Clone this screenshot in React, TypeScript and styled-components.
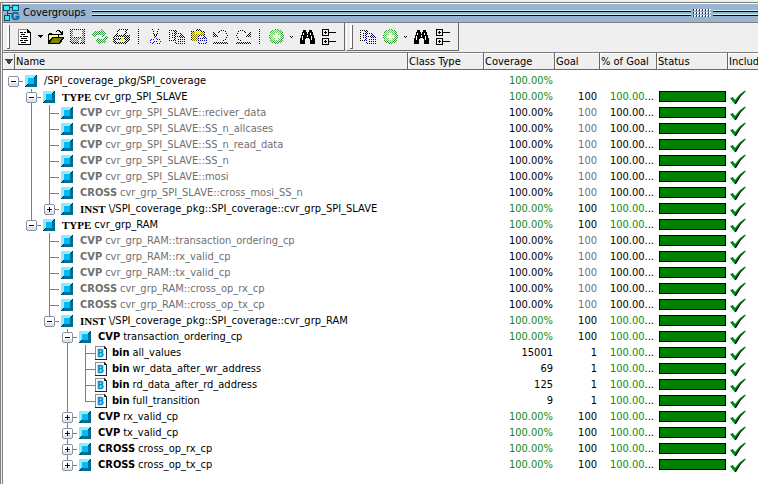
import React, { useId } from "react";
import styled, { createGlobalStyle } from "styled-components";

const line = "#7f7f7f";
const face = "#efefef";

const GlobalStyle = createGlobalStyle`
  * { box-sizing: border-box; }
  body {
    margin: 0;
    background: ${face};
    color: #000;
    font: 11px/16px "DejaVu Sans Condensed", "DejaVu Sans", sans-serif;
    white-space: nowrap;
  }
  button { font: inherit; color: inherit; padding: 0; margin: 0; border: 0; background: none; }
  svg { display: block; shape-rendering: crispEdges; flex: none; }
`;

const Window = styled.main`
  min-height: 100vh;
  padding-top: 2px;
  display: flex;
  flex-direction: column;
  overflow: hidden;
`;

const Frame = styled.div`
  flex: 1;
  display: flex;
  flex-direction: column;
  border-top: 1px solid ${line};
  border-left: 1px solid ${line};
  padding-left: 1px;
`;

const TitleBar = styled.header`
  display: flex;
  align-items: center;
  height: 20px;
  background: #99b4d1;
  border-top: 1px solid #fff;
  border-bottom: 1px solid ${line};
  border-left: 1px solid ${line};
`;

const Title = styled.h1`
  margin: 0 6px 0 2px;
  font-size: 11px;
  line-height: 16px;
  font-weight: normal;
`;

const Rails = styled.div<{ $width?: number }>`
  flex: ${(p) => (p.$width ? `0 0 ${p.$width}px` : "1")};
  height: 7px;
  background: linear-gradient(
    #c8f4fa 0 1px, #000 1px 2px, transparent 2px 4px, #c8f4fa 4px 5px, #000 5px 6px, transparent 6px
  );
`;

const Grip = styled.div`
  width: 18px;
  height: 8px;
  margin: 0 2px;
  background:
    conic-gradient(#fff 25%, transparent 0 75%, #234 0) 0 0 / 3px 3px;
`;

const ToolBars = styled.div`
  display: flex;
  gap: 1px;
  height: 29px;
  border-left: 1px solid ${line};
`;

const ToolGroup = styled.div`
  display: flex;
  align-items: center;
  height: 28px;
  padding-right: 4px;
  border-right: 1px solid #696969;
  border-bottom: 1px solid #696969;
  border-left: 1px solid #fff;
`;

const Handle = styled.span`
  width: 3px;
  height: 24px;
  margin: 0 4px 0 3px;
  background: #fff;
  border-right: 1px solid #696969;
  border-bottom: 1px solid #696969;
`;

const ToolButton = styled.button<{ $narrow?: boolean }>`
  display: flex;
  align-items: center;
  justify-content: center;
  width: ${(p) => (p.$narrow ? 9 : 22)}px;
  height: 24px;
`;

const Divider = styled.span`
  width: 1px;
  height: 15px;
  margin: 0 5px;
  background: repeating-linear-gradient(#000 0 1px, transparent 1px 2px);
`;

const Table = styled.table`
  width: 100%;
  table-layout: fixed;
  border-collapse: separate;
  border-spacing: 0;
  tbody::before { content: ""; display: block; height: 3px; }
`;

const TablePane = styled.div`
  flex: 1;
  background: #fff;
  border-left: 1px solid ${line};
`;

const Col = styled.col<{ $width?: number }>`
  width: ${(p) => (p.$width ? `${p.$width}px` : "auto")};
`;

const HeadCell = styled.th`
  height: 18px;
  padding: 1px 0 0 1px;
  line-height: 15px;
  font-weight: normal;
  text-align: left;
  background: ${face};
  border-top: 1px solid ${line};
  border-bottom: 1px solid #696969;
  border-right: 1px solid #696969;
  box-shadow: inset 1px 1px #fff;
  &:last-child { border-right: 0; }
`;

const NameHead = styled.div`
  display: flex;
  align-items: center;
`;

const SortButton = styled.button`
  display: flex;
  align-items: center;
  justify-content: center;
  width: 11px;
  height: 15px;
  margin-right: 1px;
  border-right: 1px solid #696969;
`;

const Cell = styled.td<{ $tone?: Tone; $right?: number }>`
  height: 16px;
  padding: 0 ${(p) => p.$right ?? 2}px 0 2px;
  vertical-align: top;
  text-align: right;
  color: ${(p) => tones[p.$tone ?? "black"]};
`;

const Ellipsis = styled.span`
  color: #000;
`;

const NameCell = styled.td<{ $dim?: boolean }>`
  height: 16px;
  padding: 0 0 0 2px;
  color: ${(p) => tones[p.$dim ? "gray" : "black"]};
`;

const TreeLine = styled.div`
  display: flex;
  height: 16px;
`;

const vertical = `linear-gradient(${line}, ${line}) 8px 0 / 1px 16px no-repeat`;
const upper = `linear-gradient(${line}, ${line}) 8px 0 / 1px 8px no-repeat`;
const stub = `linear-gradient(${line}, ${line}) 8px 8px / 10px 1px no-repeat`;
const guideArt: Record<string, string> = {
  " ": "none",
  "|": vertical,
  "+": `${vertical}, ${stub}`,
  L: `${upper}, ${stub}`,
  "-": stub,
};

const Guide = styled.span<{ $kind: string }>`
  flex: 0 0 18px;
  height: 16px;
  padding: 3px 0 0 3px;
  background: ${(p) => guideArt[p.$kind]};
`;

const Expander = styled.button`
  display: block;
  width: 11px;
  height: 11px;
`;

const NodeIcon = styled.span<{ $bin?: boolean }>`
  margin: ${(p) => (p.$bin ? "1px 5px 0 0" : "2px 7px 0 2px")};
`;

const Keyword = styled.b<{ $serif?: boolean }>`
  margin-right: 3px;
  font-family: ${(p) => (p.$serif ? '"Liberation Serif", serif' : "inherit")};
`;

const StatusBar = styled.div`
  height: 11px;
  margin-top: 2px;
  background: #008000;
  border: 1px solid #000;
`;

type Tone = "black" | "gray" | "green";
const tones: Record<Tone, string> = { black: "#000", gray: "#707070", green: "#128a12" };

function Dither({ children, width = 18, height = 16 }: { children: React.ReactNode; width?: number; height?: number }) {
  const id = useId().replace(/[^a-zA-Z0-9]/g, "");
  return (
    <svg width={width} height={height} viewBox={`0 0 ${width} ${height}`} aria-hidden>
      <defs>
        <pattern id={`p${id}`} width="2" height="2" patternUnits="userSpaceOnUse">
          <path d="M0 0h1v1H0zM1 1h1v1H1z" fill="#fff" />
        </pattern>
        <mask id={`m${id}`} maskUnits="userSpaceOnUse" x="0" y="0" width={width} height={height}>
          <rect width={width} height={height} fill={`url(#p${id})`} />
        </mask>
      </defs>
      <g mask={`url(#m${id})`}>{children}</g>
    </svg>
  );
}

const DocIcon = () => (
  <svg width="14" height="16" aria-hidden>
    <path d="M1 1h8l3 3v11H1z" fill="#fff" />
    <path d="M0 0h9v1H1v14H0z" fill="#8c8c8c" />
    <path d="M9 0h1v1h1v1h1v1h1v13H0v-1h12V4H9z" />
    <path d="M2 3h3v1H2zM6 3h2v1H6zM3 5h4v1H3zM2 7h2v1H2zM5 7h5v1H5zM3 9h6v1H3zM2 11h3v1H2zM6 11h4v1H6zM3 13h5v1H3z" />
  </svg>
);

const FolderIcon = () => (
  <svg width="16" height="14" aria-hidden>
    <path d="M0 4h1V3h3v1h7v3H5L1 12H0z" />
    <path d="M1 5h9v2H4L1 11z" fill="#ffff66" />
    <path d="M4 7h12v1l-4 6H0v-1z" />
    <path d="M5 8h9l-3 5H2z" fill="#808000" />
    <path d="M8 1h1V0h3v1h1v1h1V1h1v4h-4V4h2V3h-1V2h-1V1H9v1H8z" />
  </svg>
);

const SaveIcon = () => (
  <Dither width={16} height={15}>
    <path d="M0 0h15v15H1L0 14z" />
    <path d="M1 1h2v8h9V1h2v12H1z" fill="#808000" />
    <path d="M3 1h9v7H3z" fill={face} />
    <path d="M9 10h2v4H9z" fill={face} />
  </Dither>
);

const RefreshIcon = () => (
  <Dither width={18} height={16}>
    <path d="M1 6l3-4h6V0l5 5-4 4V6H6L4 8z" fill="#2c9a3c" />
    <path d="M17 8l-3 6H9v2l-5-5 4-4v3h4l2-3z" fill="#2c9a3c" />
  </Dither>
);

const PrintIcon = () => (
  <Dither width={18} height={15}>
    <path d="M5 0h10l-2 6H17v5l-3 4H2l-2-3V7l4-2z" />
    <path d="M6 1h7l-2 5H4zM2 8h10v1H2zM3 11h9v2H3z" fill={face} />
    <path d="M8 9h3v3H8z" fill="#e8e000" />
  </Dither>
);

const CutIcon = () => (
  <svg width="11" height="15" aria-hidden>
    <path d="M2 0h1v1H2zM8 0h1v1H8zM3 2h1v1H3zM7 2h1v1H7zM3 4h1v1H3zM7 4h1v1H7zM4 6h1v1H4zM6 6h1v1H6zM5 7h1v1H5zM4 5h1v1H4zM6 5h1v1H6z" />
    <path d="M4 8h1v1H4zM6 9h1v1H6zM3 10h1v1H3zM1 10h1v1H1zM0 11h1v1H0zM0 13h1v1H0zM2 14h1v1H2zM4 12h1v1H4zM3 13h1v1H3zM7 10h1v1H7zM9 10h1v1H9zM6 12h1v1H6zM10 12h1v1h-1zM7 14h1v1H7zM9 14h1v1H9z" fill="#0000ff" />
  </svg>
);

const CopyIcon = () => (
  <Dither width={16} height={14}>
    <path d="M0 0h6l2 2v9H0z" />
    <path d="M1 1h4v9H1z" fill={face} />
    <path d="M2 3h4v1H2zM2 5h4v1H2zM2 7h4v1H2z" />
    <path d="M6 3h6l4 4v7H6z" fill="#000090" />
    <path d="M7 4h4v4h4v5H7z" fill={face} />
    <path d="M8 6h3v1H8zM8 9h6v1H8zM8 11h6v1H8z" />
  </Dither>
);

const PasteIcon = () => (
  <Dither width={17} height={15}>
    <path d="M0 2h4l1-2h4l1 2h4v10H0z" />
    <path d="M1 3h12v9H1z" fill="#808000" />
    <path d="M4 2h6v3H4z" fill="#e8e000" />
    <path d="M7 6h6l3 3v6H7z" fill="#000090" />
    <path d="M8 7h4v3h3v4H8z" fill={face} />
    <path d="M9 9h3v1H9zM9 11h5v1H9z" fill="#000090" />
  </Dither>
);

const UndoIcon = ({ flip }: { flip?: boolean }) => (
  <svg width="16" height="14" aria-hidden>
    <g transform={flip ? "translate(16 0) scale(-1 1)" : undefined}>
      <path d="M0 2h1v1H0zM1 3h1v1H1zM0 4h1v1H0zM2 4h1v1H2zM1 5h1v1H1zM3 5h1v1H3zM0 6h1v1H0zM2 6h1v1H2zM4 6h1v1H4zM5 2h1v1H5zM6 1h1v1H6zM8 0h1v1H8zM10 0h1v1h-1zM12 1h1v1h-1zM13 3h1v1h-1zM14 5h1v1h-1zM13 7h1v1h-1zM12 9h1v1h-1zM10 10h1v1h-1z" />
      <path d="M1 12h1v1H1zM3 12h1v1H3zM5 12h1v1H5zM7 12h1v1H7zM9 12h1v1H9zM11 12h1v1h-1zM13 12h1v1h-1zM0 13h1v1H0zM2 13h1v1H2zM4 13h1v1H4zM6 13h1v1H6zM8 13h1v1H8zM10 13h1v1h-1zM12 13h1v1h-1zM14 13h1v1h-1z" />
    </g>
  </svg>
);

const RunIcon = () => (
  <Dither width={15} height={15}>
    <circle cx="7.5" cy="7.5" r="7.5" fill="#2f9438" />
    <circle cx="7" cy="7" r="6" fill="#6ccc5e" />
    <path d="M6 4h3v2h2v3H9v2H6V9H4V6h2z" fill="#fff" />
  </Dither>
);

const BinocularsIcon = () => (
  <svg width="15" height="14" aria-hidden>
    <path d="M3 0h3v2h1v2h1V2h1V0h3v2h1v3h1v3h1v6h-5V9H9V8H6v1H5v5H0V8h1V5h1V2h1z" />
    <path d="M3 3h1v2H3zM2 6h1v4H2zM10 3h1v2h-1zM11 6h1v4h-1zM7 5h1v2H7z" fill="#fff" />
  </svg>
);

const ExpandAllIcon = () => (
  <svg width="15" height="16" aria-hidden>
    <path fillRule="evenodd" d="M0 0h7v7H0zM1 1h5v5H1zM0 9h7v7H0zM1 10h5v5H1z" />
    <path d="M2 3h3v1H2zM3 2h1v3H3zM7 3h7v1H7zM2 12h3v1H2zM3 11h1v3H3zM7 12h7v1H7z" />
  </svg>
);

const CaretIcon = ({ small }: { small?: boolean }) =>
  small ? (
    <svg width="4" height="2" aria-hidden><path d="M0 0h1v1H0zM2 0h1v1H2zM1 1h1v1H1z" /></svg>
  ) : (
    <svg width="5" height="3" aria-hidden><path d="M0 0h5v1H0zM1 1h3v1H1zM2 2h1v1H2z" /></svg>
  );

const CovergroupIcon = () => (
  <svg width="18" height="17" aria-hidden>
    <path d="M0 0h7v6H0zM9 0h7v6H9zM1 10h6v6H1zM7 2h2v1H7zM4 6h1v4H4zM4 8h5v1H4z" fill="#10505c" />
    <path d="M1 1h5v4H1zM10 1h5v4h-5zM2 11h4v4H2z" fill="#30f0f8" />
    <text x="8" y="15" fontSize="11" fontWeight="bold" fill="#0068a8" stroke="#0068a8" strokeWidth="0.4" fontFamily="Liberation Sans, sans-serif">G</text>
  </svg>
);

const CubeIcon = () => (
  <svg width="12" height="12" aria-hidden>
    <path d="M0 0h12v12H0z" fill="#006c94" />
    <path d="M0 0h12L0 12z" fill="#98e8fc" />
    <path d="M11 0h1v1h-1zM10 1h1v1h-1zM9 2h1v1H9zM0 11h1v1H0zM1 10h1v1H1zM2 9h1v1H2z" fill="#002838" />
    <path d="M3 3h6v6H3z" fill="#00bcf4" />
  </svg>
);

const BinIcon = () => (
  <svg width="12" height="14" aria-hidden>
    <path d="M1 1h8l2 2v10H1z" fill="#fff" />
    <path d="M0 0h9v1H1v12H0z" fill="#8c8c8c" />
    <path d="M9 0h1v1h1v1h1v12H0v-1h11V3H9z" fill="#1c2430" />
    <text x="2" y="11" fontSize="10" fontWeight="bold" fill="#0090d8" stroke="#0090d8" strokeWidth="0.4" fontFamily="DejaVu Sans Condensed, sans-serif">B</text>
  </svg>
);

const ExpanderIcon = ({ open }: { open: boolean }) => (
  <svg width="11" height="11" aria-hidden>
    <path d="M1 0h9v1h1v9h-1v1H1v-1H0V1h1z" fill="#8794a8" />
    <path d="M1 1h9v9H1z" fill="#fff" />
    <path d="M1 7h9v3H1z" fill="#dde1e8" />
    <path d="M3 5h5v1H3z" />
    {!open && <path d="M5 3h1v5H5z" />}
  </svg>
);

const Check = styled.svg`
  height: 15px;
  margin-top: 1px;
  shape-rendering: auto;
`;

const CheckIcon = () => (
  <Check width="16" height="15" role="img" aria-label="Included">
    <path d="M1 9l3 0 1 2 4-5 6-5h1L11 6 6 14H5z" fill="#000" />
    <path d="M0 8l3-1 2 3 4-5 6-5-5 6-5 7H4z" fill="#009010" />
  </Check>
);

type Row = {
  guides: string;
  open?: boolean;
  kw?: string;
  name: string;
  dim?: boolean;
  cov?: string;
  goal?: string;
};

const rows: Row[] = [
  { guides: "-", open: true, name: "/SPI_coverage_pkg/SPI_coverage", goal: "" },
  { guides: " +", open: true, kw: "TYPE", name: "cvr_grp_SPI_SLAVE" },
  { guides: " |+", kw: "CVP", name: "cvr_grp_SPI_SLAVE::reciver_data", dim: true },
  { guides: " |+", kw: "CVP", name: "cvr_grp_SPI_SLAVE::SS_n_allcases", dim: true },
  { guides: " |+", kw: "CVP", name: "cvr_grp_SPI_SLAVE::SS_n_read_data", dim: true },
  { guides: " |+", kw: "CVP", name: "cvr_grp_SPI_SLAVE::SS_n", dim: true },
  { guides: " |+", kw: "CVP", name: "cvr_grp_SPI_SLAVE::mosi", dim: true },
  { guides: " |+", kw: "CROSS", name: "cvr_grp_SPI_SLAVE::cross_mosi_SS_n", dim: true },
  { guides: " |L", open: false, kw: "INST", name: "\\/SPI_coverage_pkg::SPI_coverage::cvr_grp_SPI_SLAVE" },
  { guides: " L", open: true, kw: "TYPE", name: "cvr_grp_RAM" },
  { guides: "  +", kw: "CVP", name: "cvr_grp_RAM::transaction_ordering_cp", dim: true },
  { guides: "  +", kw: "CVP", name: "cvr_grp_RAM::rx_valid_cp", dim: true },
  { guides: "  +", kw: "CVP", name: "cvr_grp_RAM::tx_valid_cp", dim: true },
  { guides: "  +", kw: "CROSS", name: "cvr_grp_RAM::cross_op_rx_cp", dim: true },
  { guides: "  +", kw: "CROSS", name: "cvr_grp_RAM::cross_op_tx_cp", dim: true },
  { guides: "  L", open: true, kw: "INST", name: "\\/SPI_coverage_pkg::SPI_coverage::cvr_grp_RAM" },
  { guides: "   +", open: true, kw: "CVP", name: "transaction_ordering_cp" },
  { guides: "   |+", kw: "bin", name: "all_values", cov: "15001", goal: "1" },
  { guides: "   |+", kw: "bin", name: "wr_data_after_wr_address", cov: "69", goal: "1" },
  { guides: "   |+", kw: "bin", name: "rd_data_after_rd_address", cov: "125", goal: "1" },
  { guides: "   |L", kw: "bin", name: "full_transition", cov: "9", goal: "1" },
  { guides: "   +", open: false, kw: "CVP", name: "rx_valid_cp" },
  { guides: "   +", open: false, kw: "CVP", name: "tx_valid_cp" },
  { guides: "   +", open: false, kw: "CROSS", name: "cross_op_rx_cp" },
  { guides: "   L", open: false, kw: "CROSS", name: "cross_op_tx_cp" },
];

function CoverageRow({ row }: { row: Row }) {
  const { guides, open, kw, name, dim, cov, goal = "100" } = row;
  const bin = kw === "bin";
  return (
    <tr>
      <NameCell $dim={dim}>
        <TreeLine>
          {[...guides].map((kind, i) => (
            <Guide key={i} $kind={kind}>
              {i === guides.length - 1 && open !== undefined && (
                <Expander type="button" aria-label={`${open ? "Collapse" : "Expand"} ${name}`} aria-expanded={open}>
                  <ExpanderIcon open={open} />
                </Expander>
              )}
            </Guide>
          ))}
          <NodeIcon $bin={bin}>{bin ? <BinIcon /> : <CubeIcon />}</NodeIcon>
          {kw && <Keyword $serif={kw === "TYPE" || kw === "INST"}>{kw}</Keyword>}
          <span>{name}</span>
        </TreeLine>
      </NameCell>
      <Cell />
      <Cell $tone={dim || cov ? "black" : "green"}>{cov ?? "100.00%"}</Cell>
      <Cell $tone={dim ? "gray" : "black"} $right={3}>{goal}</Cell>
      <Cell $tone={dim ? "black" : "green"} $right={3}>{goal && <>100.00<Ellipsis>...</Ellipsis></>}</Cell>
      <Cell>{goal && <StatusBar role="img" aria-label="Covered" />}</Cell>
      <Cell>{goal && <CheckIcon />}</Cell>
    </tr>
  );
}

const Tool = ({ label, narrow, children }: { label: string; narrow?: boolean; children: React.ReactNode }) => (
  <ToolButton type="button" aria-label={label} $narrow={narrow}>{children}</ToolButton>
);

export default function App() {
  return (
    <Window>
      <GlobalStyle />
      <Frame>
        <TitleBar>
          <CovergroupIcon />
          <Title>Covergroups</Title>
          <Rails />
          <Grip />
          <Rails $width={45} />
        </TitleBar>
        <ToolBars>
          <ToolGroup role="toolbar" aria-label="Standard">
            <Handle />
            <Tool label="New"><DocIcon /></Tool>
            <Tool label="New options" narrow><CaretIcon /></Tool>
            <Tool label="Open"><FolderIcon /></Tool>
            <Tool label="Save"><SaveIcon /></Tool>
            <Tool label="Reload"><RefreshIcon /></Tool>
            <Tool label="Print"><PrintIcon /></Tool>
            <Divider />
            <Tool label="Cut"><CutIcon /></Tool>
            <Tool label="Copy"><CopyIcon /></Tool>
            <Tool label="Paste"><PasteIcon /></Tool>
            <Tool label="Undo"><UndoIcon /></Tool>
            <Tool label="Redo"><UndoIcon flip /></Tool>
            <Divider />
            <Tool label="Add"><RunIcon /></Tool>
            <Tool label="Add options" narrow><CaretIcon small /></Tool>
            <Tool label="Find"><BinocularsIcon /></Tool>
            <Tool label="Expand all"><ExpandAllIcon /></Tool>
          </ToolGroup>
          <ToolGroup role="toolbar" aria-label="Edit">
            <Handle />
            <Tool label="Copy selection"><CopyIcon /></Tool>
            <Tool label="Add selection"><RunIcon /></Tool>
            <Tool label="Add selection options" narrow><CaretIcon small /></Tool>
            <Tool label="Find in selection"><BinocularsIcon /></Tool>
            <Tool label="Expand selection"><ExpandAllIcon /></Tool>
          </ToolGroup>
        </ToolBars>
        <TablePane>
          <Table>
            <colgroup>
              <Col />
              <Col $width={76} />
              <Col $width={71} />
              <Col $width={45} />
              <Col $width={57} />
              <Col $width={71} />
              <Col $width={30} />
            </colgroup>
            <thead>
              <tr>
                <HeadCell>
                  <NameHead>
                    <SortButton type="button" aria-label="Sort">
                      <svg width="8" height="6" aria-hidden><path d="M0 0h8L4 6z" fill="#444" /></svg>
                    </SortButton>
                    Name
                  </NameHead>
                </HeadCell>
                <HeadCell>Class Type</HeadCell>
                <HeadCell>Coverage</HeadCell>
                <HeadCell>Goal</HeadCell>
                <HeadCell>% of Goal</HeadCell>
                <HeadCell>Status</HeadCell>
                <HeadCell>Includ</HeadCell>
              </tr>
            </thead>
            <tbody>
              {rows.map((row) => <CoverageRow key={row.guides + row.kw + row.name} row={row} />)}
            </tbody>
          </Table>
        </TablePane>
      </Frame>
    </Window>
  );
}
